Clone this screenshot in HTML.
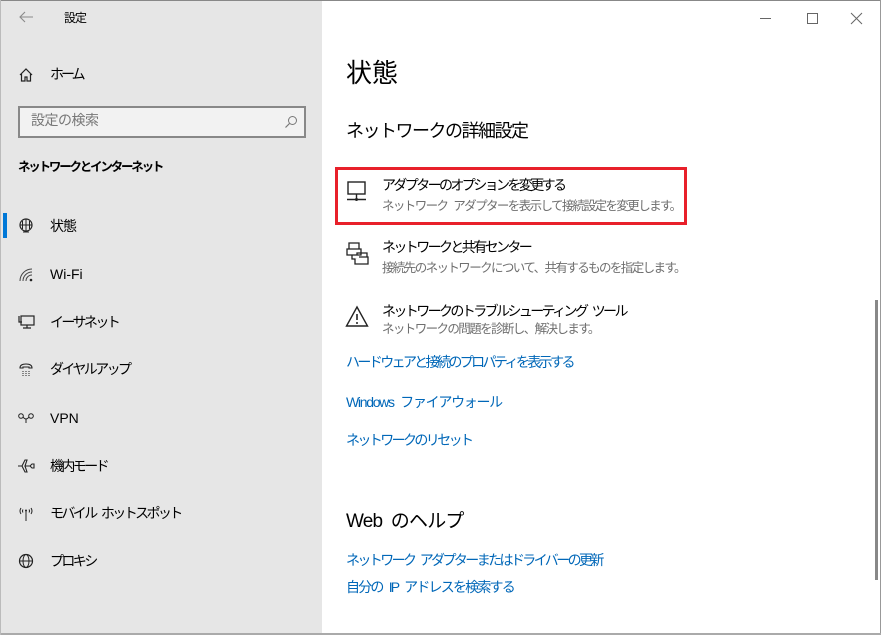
<!DOCTYPE html>
<html><head><meta charset="utf-8"><style>
*{margin:0;padding:0;box-sizing:border-box}
body{width:881px;height:635px;overflow:hidden;background:#fff;font-family:"Liberation Sans","Noto Sans CJK JP",sans-serif;color:#000;position:relative}
.a{position:absolute;white-space:nowrap;line-height:1;letter-spacing:-2.6px;word-spacing:4px}
#left{position:absolute;left:0;top:0;width:322px;height:635px;background:#e6e6e6}
.ic{position:absolute}
.lk{color:#0067b8;font-size:14px}
.sub{color:#6f6f6f;font-size:12.5px;letter-spacing:-1.6px}
</style></head><body>
<div id="left"></div>
<div style="position:absolute;left:0;top:0;width:881px;height:1px;background:#888"></div>
<div style="position:absolute;left:880px;top:0;width:1px;height:635px;background:#999"></div>
<div style="position:absolute;left:0;top:633px;width:881px;height:2px;background:#aaa"></div>
<div style="position:absolute;left:0;top:0;width:1px;height:635px;background:#bbb"></div>

<svg class="ic" style="left:18px;top:10px" width="16" height="14"><path d="M15 7H2M7 2L2 7l5 5" fill="none" stroke="#8a8a8a" stroke-width="1.1"/></svg>
<div class="a" style="left:64px;top:12px;font-size:12px;letter-spacing:-1px">設定</div>

<svg class="ic" style="left:18px;top:67px" width="16" height="16"><path d="M2 8L8 2l6 6M3.5 7v7h3.5v-4h2v4h3.5V7" fill="none" stroke="#222" stroke-width="1.2"/></svg>
<div class="a" style="left:50px;top:67px;font-size:14px;letter-spacing:-3px">ホーム</div>

<div style="position:absolute;left:18px;top:106px;width:288px;height:32px;border:2px solid #888;background:#f2f2f2"></div>
<div class="a" style="left:31px;top:113px;font-size:14px;color:#777;letter-spacing:-0.5px">設定の検索</div>
<svg class="ic" style="left:284px;top:115px" width="14" height="14"><circle cx="8.5" cy="5.5" r="4" fill="none" stroke="#777" stroke-width="1"/><path d="M5.5 8.5L1.5 12.5" stroke="#777" stroke-width="1.2"/></svg>

<div class="a" style="left:18px;top:161px;font-size:12.5px;font-weight:bold;letter-spacing:-2.2px">ネットワークとインターネット</div>

<div style="position:absolute;left:3px;top:213px;width:4px;height:25px;background:#0078d7"></div>
<svg class="ic" style="left:18px;top:218px" width="16" height="16"><circle cx="8" cy="7" r="6" fill="none" stroke="#222" stroke-width="1.2"/><path d="M2 7h12M8 1v12M4.5 3v8M11.5 3v8M5 14h6" fill="none" stroke="#222" stroke-width="1"/></svg>
<div class="a" style="left:50px;top:219px;font-size:14px;letter-spacing:-1px">状態</div>

<svg class="ic" style="left:18px;top:267px" width="16" height="16"><path d="M2 14A12 12 0 0 1 14 2M5 14A9 9 0 0 1 14 5M8 14A6 6 0 0 1 14 8" fill="none" stroke="#444" stroke-width="1"/><circle cx="13" cy="13" r="1.3" fill="#222"/></svg>
<div class="a" style="left:50px;top:267px;font-size:14px;letter-spacing:0">Wi-Fi</div>

<svg class="ic" style="left:18px;top:314px" width="17" height="16"><rect x="3" y="2" width="13" height="9" fill="none" stroke="#222" stroke-width="1.2"/><path d="M9 11v3M5 14h8M1 2v6h3" fill="none" stroke="#222" stroke-width="1.2"/></svg>
<div class="a" style="left:50px;top:315px;font-size:14px">イーサネット</div>

<svg class="ic" style="left:18px;top:361px" width="16" height="16"><path d="M2 7q0-4 6-4t6 4h-3v-1h-6v1z" fill="none" stroke="#222" stroke-width="1.1"/><path d="M5 10v5M8 10v5M11 10v5" stroke="#222" stroke-dasharray="1 1" stroke-width="1"/></svg>
<div class="a" style="left:50px;top:362px;font-size:14px">ダイヤルアップ</div>

<svg class="ic" style="left:17px;top:411px" width="18" height="14"><circle cx="4" cy="5" r="2.3" fill="none" stroke="#222"/><circle cx="14" cy="5" r="2.3" fill="none" stroke="#222"/><path d="M6 6q3 4 6 0M9 8v4" fill="none" stroke="#222"/></svg>
<div class="a" style="left:50px;top:411px;font-size:14px;letter-spacing:0">VPN</div>

<svg class="ic" style="left:17px;top:458px" width="18" height="16"><path d="M1 8h4l3-6h2l-2 6h5l2-2h2v4h-2l-2-2M8 8l2 6H8L5 8" fill="none" stroke="#222" stroke-width="1.1"/></svg>
<div class="a" style="left:50px;top:459px;font-size:14px">機内モード</div>

<svg class="ic" style="left:17px;top:506px" width="18" height="16"><path d="M9 5v10M4 2q-2 3 0 6M14 2q2 3 0 6M6 3.5q-1 1.5 0 3M12 3.5q1 1.5 0 3" fill="none" stroke="#222" stroke-width="1"/><circle cx="9" cy="4.5" r="1" fill="#222"/></svg>
<div class="a" style="left:50px;top:506px;font-size:14px">モバイル ホットスポット</div>

<svg class="ic" style="left:18px;top:553px" width="16" height="16"><circle cx="8" cy="8" r="6.5" fill="none" stroke="#222" stroke-width="1.2"/><ellipse cx="8" cy="8" rx="3" ry="6.5" fill="none" stroke="#222"/><path d="M1.5 8h13" stroke="#222"/></svg>
<div class="a" style="left:50px;top:554px;font-size:14px">プロキシ</div>

<svg class="ic" style="left:758px;top:12px" width="110" height="14"><path d="M2 6.5h11" stroke="#666"/><rect x="49.5" y="1.5" width="10" height="10" fill="none" stroke="#666"/><path d="M93 1l11 11M104 1L93 12" stroke="#666"/></svg>
<div style="position:absolute;left:875px;top:300px;width:3px;height:280px;background:#888"></div>

<div class="a" style="left:346px;top:60px;font-size:26px;letter-spacing:0">状態</div>
<div class="a" style="left:346px;top:122px;font-size:18px;letter-spacing:-1.5px">ネットワークの詳細設定</div>

<div style="position:absolute;left:335px;top:167px;width:352px;height:58px;border:3px solid #e8202a"></div>
<svg class="ic" style="left:345px;top:180px" width="24" height="24"><rect x="3" y="2" width="17" height="12" fill="none" stroke="#222" stroke-width="1.4"/><path d="M11.5 14v5M2 19.5h19" stroke="#222" stroke-width="1.4"/><circle cx="11.5" cy="19.5" r="1.5" fill="#222"/></svg>
<div class="a" style="left:382px;top:178px;font-size:14px">アダプターのオプションを変更する</div>
<div class="a sub" style="left:382px;top:200px">ネットワーク アダプターを表示して接続設定を変更します。</div>

<svg class="ic" style="left:345px;top:240px" width="24" height="26"><path d="M4 3h10v6H4zM2 9h14v6H2zM7 15v4h15v-6h-10v2" fill="#fff" stroke="#222" stroke-width="1.3"/><path d="M10 19v5h13v-7h-9" fill="#fff" stroke="#222" stroke-width="1.3"/></svg>
<div class="a" style="left:382px;top:240px;font-size:14px">ネットワークと共有センター</div>
<div class="a sub" style="left:382px;top:262px">接続先のネットワークについて、共有するものを指定します。</div>

<svg class="ic" style="left:345px;top:305px" width="24" height="24"><path d="M12 2L1.5 21h21z" fill="none" stroke="#222" stroke-width="1.4"/><path d="M12 9v6" stroke="#222" stroke-width="1.6"/><circle cx="12" cy="18" r="1" fill="#222"/></svg>
<div class="a" style="left:382px;top:304px;font-size:14px">ネットワークのトラブルシューティング ツール</div>
<div class="a sub" style="left:382px;top:323px">ネットワークの問題を診断し、解決します。</div>

<div class="a lk" style="left:346px;top:355px">ハードウェアと接続のプロパティを表示する</div>
<div class="a lk" style="left:346px;top:395px;letter-spacing:-1.3px">Windows ファイアウォール</div>
<div class="a lk" style="left:346px;top:433px">ネットワークのリセット</div>

<div class="a" style="left:346px;top:512px;font-size:19px;letter-spacing:-0.8px">Web のヘルプ</div>
<div class="a lk" style="left:346px;top:553px">ネットワーク アダプターまたはドライバーの更新</div>
<div class="a lk" style="left:346px;top:580px;letter-spacing:-1.8px">自分の IP アドレスを検索する</div>
</body></html>
